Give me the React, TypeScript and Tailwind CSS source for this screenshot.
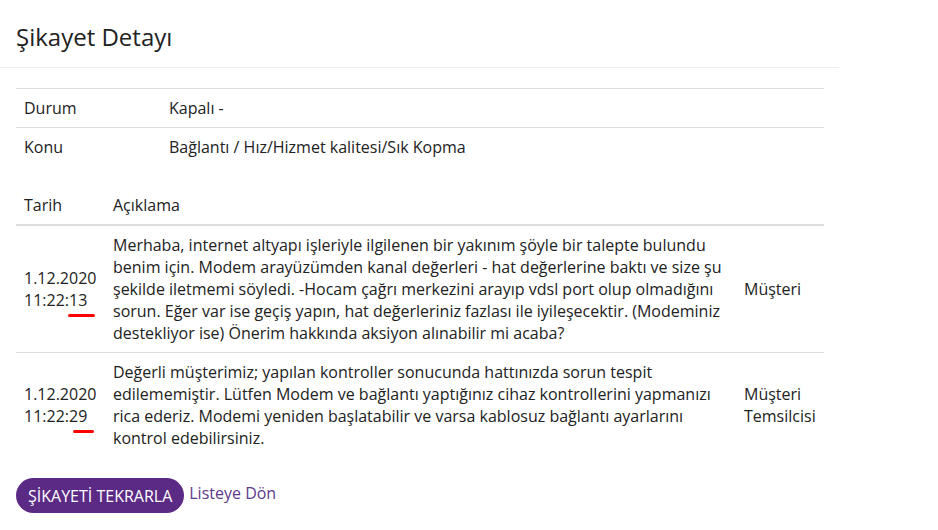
import React from "react";

const rows = [
  {
    date: "1.12.2020",
    time: "11:22:",
    sec: "13",
    mark: "left-[-1px] w-[27px]",
    text:
      "Merhaba, internet altyapı işleriyle ilgilenen bir yakınım şöyle bir talepte bulundu benim için. Modem arayüzümden kanal değerleri - hat değerlerine baktı ve size şu şekilde iletmemi söyledi. -Hocam çağrı merkezini arayıp vdsl port olup olmadığını sorun. Eğer var ise geçiş yapın, hat değerleriniz fazlası ile iyileşecektir. (Modeminiz destekliyor ise) Önerim hakkında aksiyon alınabilir mi acaba?",
    who: "Müşteri",
  },
  {
    date: "1.12.2020",
    time: "11:22:",
    sec: "29",
    mark: "left-[4px] w-[21px]",
    text:
      "Değerli müşterimiz; yapılan kontroller sonucunda hattınızda sorun tespit edilememiştir. Lütfen Modem ve bağlantı yaptığınız cihaz kontrollerini yapmanızı rica ederiz. Modemi yeniden başlatabilir ve varsa kablosuz bağlantı ayarlarını kontrol edebilirsiniz.",
    who: "Müşteri Temsilcisi",
  },
];

export default function App() {
  return (
    <div className="w-[938px] h-[530px] bg-white text-[#222] font-['Open_Sans',sans-serif] text-[16px] leading-[22px]">
      {/* page header */}
      <div className="w-[839px] h-[68px] border-b border-[#eeeeee] pl-4 pt-[22px]">
        <h1 className="text-[24px] leading-[30px] font-normal">Şikayet Detayı</h1>
      </div>

      <div className="px-4 pt-5 w-[840px]">
        {/* status table */}
        <table className="w-[808px] table-fixed border-collapse">
          <colgroup>
            <col className="w-[145px]" />
            <col />
          </colgroup>
          <tbody>
            <tr className="border-t border-b border-[#dddddd]">
              <td className="px-2 py-2">Durum</td>
              <td className="px-2 py-2">Kapalı -</td>
            </tr>
            <tr>
              <td className="px-2 py-2">Konu</td>
              <td className="px-2 py-2">Bağlantı / Hız/Hizmet kalitesi/Sık Kopma</td>
            </tr>
          </tbody>
        </table>

        {/* history table */}
        <table className="w-[808px] table-fixed border-collapse mt-5">
          <colgroup>
            <col className="w-[89px]" />
            <col className="w-[631px]" />
            <col />
          </colgroup>
          <thead>
            <tr className="border-b-2 border-[#dddddd]">
              <th className="px-2 py-2 text-left font-normal">Tarih</th>
              <th className="px-2 py-2 text-left font-normal">Açıklama</th>
              <th className="px-2 py-2" />
            </tr>
          </thead>
          <tbody>
            {rows.map((r, i) => (
              <tr key={i} className={i === 0 ? "border-b border-[#dddddd]" : ""}>
                <td className="px-2 py-2 align-middle">
                  {r.date}
                  <br />
                  {r.time}
                  <span className="relative">
                    {r.sec}
                    <span className={`absolute top-[25px] h-[3px] rounded-full bg-[#ff0000] ${r.mark}`} />
                  </span>
                </td>
                <td className="px-2 py-2 align-middle">{r.text}</td>
                <td className="px-2 py-2 align-middle">{r.who}</td>
              </tr>
            ))}
          </tbody>
        </table>

        {/* actions */}
        <div className="mt-[21px] flex items-center gap-[5px]">
          <button className="h-[35px] px-3 rounded-full bg-[#5b2a85] text-white text-[16px] uppercase">
            ŞİKAYETİ TEKRARLA
          </button>
          <a className="text-[#5e3a8c] -mt-[5px]" href="#">
            Listeye Dön
          </a>
        </div>
      </div>
    </div>
  );
}
